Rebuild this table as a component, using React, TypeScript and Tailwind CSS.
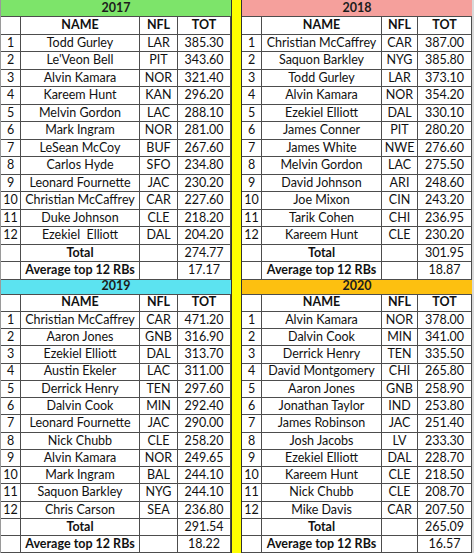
import React from 'react';

type Row = [string, string, string];

const data2017: Row[] = [
  ['Todd Gurley', 'LAR', '385.30'],
  ["Le'Veon Bell", 'PIT', '343.60'],
  ['Alvin Kamara', 'NOR', '321.40'],
  ['Kareem Hunt', 'KAN', '296.20'],
  ['Melvin Gordon', 'LAC', '288.10'],
  ['Mark Ingram', 'NOR', '281.00'],
  ['LeSean McCoy', 'BUF', '267.60'],
  ['Carlos Hyde', 'SFO', '234.80'],
  ['Leonard Fournette', 'JAC', '230.20'],
  ['Christian McCaffrey', 'CAR', '227.60'],
  ['Duke Johnson', 'CLE', '218.20'],
  ['Ezekiel  Elliott', 'DAL', '204.20'],
];

const data2018: Row[] = [
  ['Christian McCaffrey', 'CAR', '387.00'],
  ['Saquon Barkley', 'NYG', '385.80'],
  ['Todd Gurley', 'LAR', '373.10'],
  ['Alvin Kamara', 'NOR', '354.20'],
  ['Ezekiel Elliott', 'DAL', '330.10'],
  ['James Conner', 'PIT', '280.20'],
  ['James White', 'NWE', '276.60'],
  ['Melvin Gordon', 'LAC', '275.50'],
  ['David Johnson', 'ARI', '248.60'],
  ['Joe Mixon', 'CIN', '243.20'],
  ['Tarik Cohen', 'CHI', '236.95'],
  ['Kareem Hunt', 'CLE', '230.20'],
];

const data2019: Row[] = [
  ['Christian McCaffrey', 'CAR', '471.20'],
  ['Aaron Jones', 'GNB', '316.90'],
  ['Ezekiel Elliott', 'DAL', '313.70'],
  ['Austin Ekeler', 'LAC', '311.00'],
  ['Derrick Henry', 'TEN', '297.60'],
  ['Dalvin Cook', 'MIN', '292.40'],
  ['Leonard Fournette', 'JAC', '290.00'],
  ['Nick Chubb', 'CLE', '258.20'],
  ['Alvin Kamara', 'NOR', '249.65'],
  ['Mark Ingram', 'BAL', '244.10'],
  ['Saquon Barkley', 'NYG', '244.10'],
  ['Chris Carson', 'SEA', '236.80'],
];

const data2020: Row[] = [
  ['Alvin Kamara', 'NOR', '378.00'],
  ['Dalvin Cook', 'MIN', '341.00'],
  ['Derrick Henry', 'TEN', '335.50'],
  ['David Montgomery', 'CHI', '265.80'],
  ['Aaron Jones', 'GNB', '258.90'],
  ['Jonathan Taylor', 'IND', '253.80'],
  ['James Robinson', 'JAC', '251.40'],
  ['Josh Jacobs', 'LV', '233.30'],
  ['Ezekiel Elliott', 'DAL', '228.70'],
  ['Kareem Hunt', 'CLE', '218.50'],
  ['Nick Chubb', 'CLE', '208.70'],
  ['Mike Davis', 'CAR', '207.50'],
];

type BlockProps = {
  year: string;
  headerClass: string;
  cols: string;
  headerH: string;
  rowH: string;
  rows: Row[];
  total: string;
  avg: string;
};

function Block({ year, headerClass, cols, headerH, rowH, rows, total, avg }: BlockProps) {
  const cell = 'border-r border-[#4d4d4d] flex items-center justify-center whitespace-pre leading-none';
  const line = `grid ${cols} ${rowH} border-b border-[#4d4d4d] bg-white`;
  return (
    <div className="flex flex-col">
      <div className={`${headerH} ${headerClass} border-b border-[#4d4d4d] flex items-center justify-center font-bold text-[#1c1c1c]`}>
        {year}
      </div>
      <div className={line}>
        <div className={cell} />
        <div className={`${cell} font-bold`}>NAME</div>
        <div className={`${cell} font-bold`}>NFL</div>
        <div className={`${cell} font-bold`}>TOT</div>
      </div>
      {rows.map((r, i) => (
        <div key={`${year}-${i}`} className={line}>
          <div className={cell}>{i + 1}</div>
          <div className={cell}>{r[0]}</div>
          <div className={cell}>{r[1]}</div>
          <div className={cell}>{r[2]}</div>
        </div>
      ))}
      <div className={line}>
        <div className={cell} />
        <div className={`${cell} font-bold`}>Total</div>
        <div className={cell} />
        <div className={cell}>{total}</div>
      </div>
      <div className={line}>
        <div className={cell} />
        <div className={`${cell} font-bold`}>Average top 12 RBs</div>
        <div className={cell} />
        <div className={cell}>{avg}</div>
      </div>
    </div>
  );
}

export default function App() {
  const leftCols = 'grid-cols-[20px_119px_38px_53px]';
  const rightCols = 'grid-cols-[20px_120px_36px_54px]';
  return (
    <div
      className="w-[474px] h-[553px] overflow-hidden bg-white flex text-[12.5px] text-[#111]"
      style={{ fontFamily: 'Lato, "Open Sans", sans-serif' }}
    >
      {/* Left column: 2017 / 2019 */}
      <div className="w-[231px] flex flex-col">
        <div className="w-[231px] border-l border-[#9a9a9a]">
          <Block
            year="2017"
            headerClass="bg-[#7de46a]"
            cols={leftCols}
            headerH="h-[17px]"
            rowH="h-[17.5px]"
            rows={data2017}
            total="274.77"
            avg="17.17"
          />
          <Block
            year="2019"
            headerClass="bg-[#5ce3f0]"
            cols={leftCols}
            headerH="h-[15px]"
            rowH="h-[17.27px]"
            rows={data2019}
            total="291.54"
            avg="18.22"
          />
        </div>
      </div>
      {/* Yellow divider */}
      <div className="w-[11px] bg-[#ffff00] border-x border-[#333]" />
      {/* Right column: 2018 / 2020 */}
      <div className="w-[232px] flex bg-[#d9d9d9]">
        <div className="w-[230px]">
          <Block
            year="2018"
            headerClass="bg-[#f5a09c]"
            cols={rightCols}
            headerH="h-[17px]"
            rowH="h-[17.5px]"
            rows={data2018}
            total="301.95"
            avg="18.87"
          />
          <Block
            year="2020"
            headerClass="bg-[#fdc010]"
            cols={rightCols}
            headerH="h-[15px]"
            rowH="h-[17.27px]"
            rows={data2020}
            total="265.09"
            avg="16.57"
          />
        </div>
      </div>
    </div>
  );
}
